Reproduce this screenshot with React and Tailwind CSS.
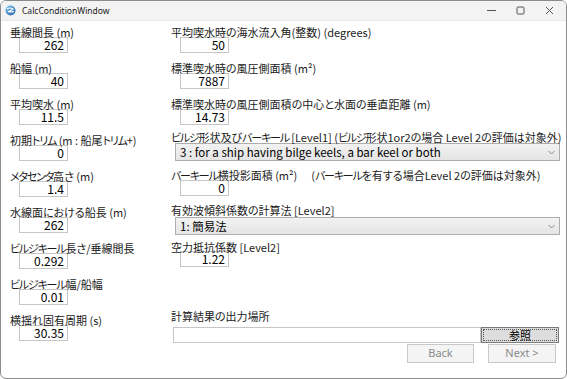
import React from 'react';

// katakana in the original font run narrower than Noto's, so pull them in a bit
function jp(text) {
  return text.split(/([\u30a0-\u30ff]+)/).map((part, i) =>
    /[\u30a0-\u30ff]/.test(part) ? (
      <span key={i} className="tracking-[-1.2px]">
        {part}
      </span>
    ) : (
      part
    )
  );
}

function NumBox({ value, className = '-mt-[2px]' }) {
  return (
    <div
      className={`ml-[9px] ${className} w-[49px] h-[16px] border border-[#c6c6c6] bg-white text-right pr-[3px] text-[12px] leading-[14px] text-black`}>
      {value}
    </div>
  );
}

function Label({ text, extra }) {
  return (
    <div className="h-[13px] leading-[13px] text-[11px] whitespace-nowrap text-[#1a1a1a]">
      {jp(text)}
      {extra && <span className="ml-[14px]">{jp(extra)}</span>}
    </div>
  );
}

function Select({ text, className = '' }) {
  return (
    <div
      className={`ml-[4px] h-[18px] flex items-center justify-between border border-[#adadad] bg-gradient-to-b from-[#f2f2f2] to-[#e5e5e5] pl-[4px] pr-[4px] ${className}`}>
      <span className="text-[11.5px] leading-[16px] text-black">{text}</span>
      <svg width="7" height="5" viewBox="0 0 7 5">
        <path d="M0.5 1 L3.5 4 L6.5 1" fill="none" stroke="#8a8a8a" strokeWidth="1" />
      </svg>
    </div>
  );
}

const leftFields = [
  ['垂線間長 (m)', '262'],
  ['船幅 (m)', '40'],
  ['平均喫水 (m)', '11.5'],
  ['初期トリム (m : 船尾トリム+)', '0'],
  ['メタセンタ高さ (m)', '1.4'],
  ['水線面における船長 (m)', '262'],
  ['ビルジキール長さ/垂線間長', '0.292'],
  ['ビルジキール幅/船幅', '0.01'],
  ['横揺れ固有周期 (s)', '30.35'],
];

function TitleBar() {
  return (
    <div className="h-[20px] shrink-0 flex items-center bg-[#f3f3f3] border-b border-[#e8e8e8]">
      <svg className="ml-[4px]" width="11" height="11" viewBox="0 0 11 11">
        <defs>
          <linearGradient id="gl" x1="0" y1="0" x2="1" y2="1">
            <stop offset="0" stopColor="#7cc6f0" />
            <stop offset="1" stopColor="#1f5fa8" />
          </linearGradient>
        </defs>
        <circle cx="5.5" cy="5.5" r="5" fill="url(#gl)" />
        <path d="M2 4 Q5 2 8 4 Q6 6 3 6.5 Q6 7.5 9 6.5" fill="none" stroke="#ffffff" strokeWidth="1.1" />
      </svg>
      <span className="ml-[6px] text-[8.5px] leading-[12px] text-[#1a1a1a] font-['Noto_Sans','Open_Sans',sans-serif]">
        CalcConditionWindow
      </span>
      <div className="ml-auto flex items-center h-full">
        <div className="w-[29px] h-full flex items-center justify-center">
          <svg width="9" height="9" viewBox="0 0 9 9">
            <path d="M0 4.5 H9" stroke="#555" strokeWidth="1" />
          </svg>
        </div>
        <div className="w-[29px] h-full flex items-center justify-center">
          <svg width="9" height="9" viewBox="0 0 9 9">
            <rect x="1" y="1" width="7" height="7" rx="1" fill="none" stroke="#555" strokeWidth="1" />
          </svg>
        </div>
        <div className="w-[29px] h-full flex items-center justify-center mr-[2px]">
          <svg width="9" height="9" viewBox="0 0 9 9">
            <path d="M1 1 L8 8 M8 1 L1 8" stroke="#555" strokeWidth="1" />
          </svg>
        </div>
      </div>
    </div>
  );
}

export default function App() {
  return (
    <div className="w-[567px] h-[379px] bg-white border border-[#8c8c8c] rounded-[6px] overflow-hidden flex flex-col font-['Noto_Sans_CJK_JP','Noto_Sans',sans-serif] [font-feature-settings:'palt']">
      <TitleBar />
      <div className="flex flex-1 min-h-0 pl-[9px] pt-[5px]">
        <div className="w-[161px] shrink-0 flex flex-col">
          {leftFields.map(([label, value], i) => (
            <div key={label} className={i === 0 ? '' : 'mt-[9px]'}>
              <Label text={label} />
              <NumBox value={value} />
            </div>
          ))}
        </div>

        <div className="flex-1 min-w-0 flex flex-col pr-[6px]">
          <div>
            <Label text="平均喫水時の海水流入角(整数) (degrees)" />
            <NumBox value="50" />
          </div>
          <div className="mt-[9px]">
            <Label text="標準喫水時の風圧側面積 (m²)" />
            <NumBox value="7887" />
          </div>
          <div className="mt-[9px]">
            <Label text="標準喫水時の風圧側面積の中心と水面の垂直距離 (m)" />
            <NumBox value="14.73" />
          </div>
          <div className="mt-[6px]">
            <Label text="ビルジ形状及びバーキール [Level1] (ビルジ形状1or2の場合 Level 2の評価は対象外)" />
            <Select text="3 : for a ship having bilge keels, a bar keel or both" className="-mt-[1px]" />
          </div>
          <div className="mt-[8px]">
            <Label text="バーキール横投影面積 (m²)" extra="(バーキールを有する場合Level 2の評価は対象外)" />
            <NumBox value="0" />
          </div>
          <div className="mt-[8px]">
            <Label text="有効波傾斜係数の計算法 [Level2]" />
            <Select text="1: 簡易法" />
          </div>
          <div className="mt-[6px]">
            <Label text="空力抵抗係数 [Level2]" />
            <NumBox value="1.22" className="-mt-[3px]" />
          </div>

          <div className="mt-[43px]">
            <Label text="計算結果の出力場所" />
            <div className="mt-[4px] ml-[2px] mr-[1px] flex">
              <div className="flex-1 h-[16px] border border-[#c6c6c6] bg-white" />
              <div className="w-[78px] h-[16px] border border-[#7a7a7a] bg-[#dddddd] p-[1px]">
                <div className="h-full border border-dotted border-[#555] flex items-center justify-center text-[11px] leading-[12px] text-black">
                  参照
                </div>
              </div>
            </div>
            <div className="mt-[1px] flex justify-end gap-[14px] pr-[4px]">
              <div className="w-[67px] h-[19px] border border-[#c9c9c9] bg-[#f4f4f4] flex items-center justify-center text-[11px] text-[#8a8a8a] font-['Noto_Sans','Open_Sans',sans-serif]">
                Back
              </div>
              <div className="w-[68px] h-[19px] border border-[#c9c9c9] bg-[#f4f4f4] flex items-center justify-center text-[11px] text-[#8a8a8a] font-['Noto_Sans','Open_Sans',sans-serif]">
                Next &gt;
              </div>
            </div>
          </div>
        </div>
      </div>
    </div>
  );
}
